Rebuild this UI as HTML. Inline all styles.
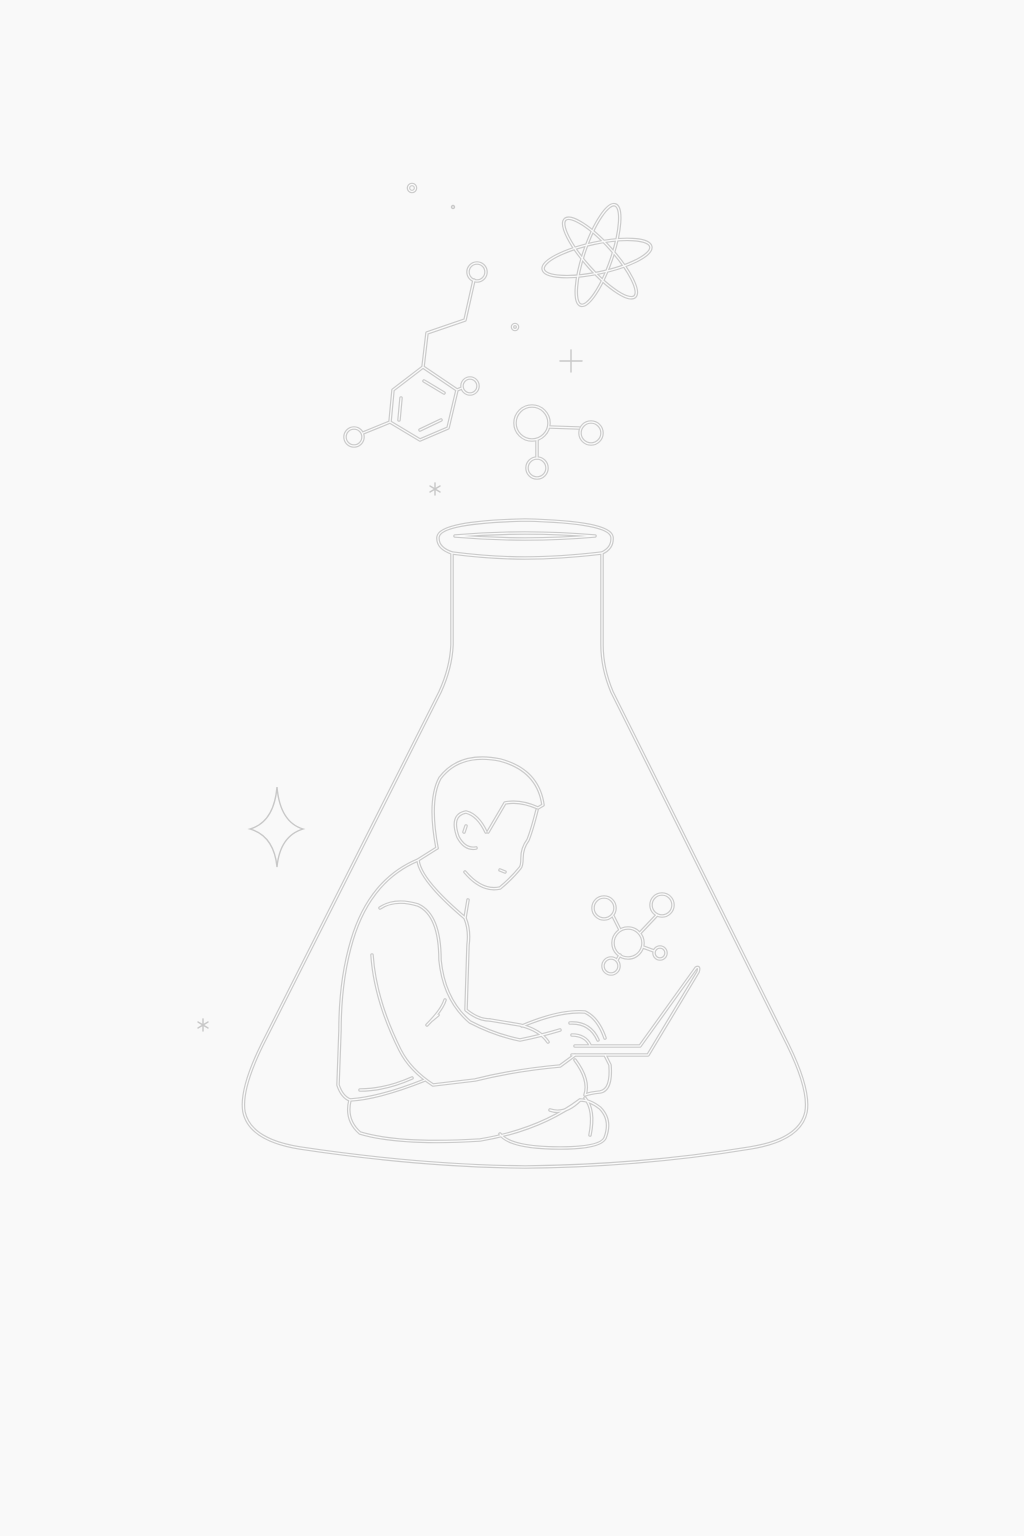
<!DOCTYPE html>
<html><head><meta charset="utf-8"><style>
html,body{margin:0;padding:0;background:#f9f9f9;}
svg{display:block}
</style></head><body>
<svg width="1024" height="1536" viewBox="0 0 1024 1536" xmlns="http://www.w3.org/2000/svg">
<rect width="1024" height="1536" fill="#f9f9f9"/>
<defs>
<g id="art" fill="none" stroke-linecap="round" stroke-linejoin="round">
<!-- flask -->
<path d="M452,553 L452,645 Q451,668 440,692 L262,1045 Q240,1090 244,1112 Q250,1140 300,1148 Q420,1166 525,1167 Q640,1166 750,1148 Q800,1140 806,1112 Q810,1090 788,1045 L612,692 Q602,668 602,645 L602,553"/>
<path d="M452,553 Q437,548 438,537 Q440,522 525,520 Q610,522 612,537 Q613,548 602,553 Q560,558 525,558 Q490,558 452,553Z"/>
<path d="M455,536 Q525,530 595,536 Q525,542 455,536Z"/>
<!-- molecule left -->
<path d="M423,367 L457,390 L448,428 L420,440 L390,422 L393,390 Z"/>
<path d="M424,381 L444,393 M401,398 L399,420 M420,430 L441,420"/>
<path d="M423,367 L427,333 L465,320 L474,280"/>
<circle cx="477" cy="272" r="9"/>
<path d="M457,390 L462,388"/><circle cx="470" cy="386" r="8"/>
<path d="M390,422 L363,433"/><circle cx="354" cy="437" r="9"/>
<!-- small molecule -->
<circle cx="532" cy="423" r="17"/>
<path d="M549,427 L579,428"/><circle cx="591" cy="433" r="11"/>
<path d="M537,440 L537,458"/><circle cx="537" cy="468" r="10"/>
<!-- atom -->
<ellipse cx="597" cy="258" rx="55" ry="15" transform="rotate(-12 597 258)"/>
<ellipse cx="598" cy="255" rx="53" ry="14" transform="rotate(-71 598 255)"/>
<ellipse cx="600" cy="258" rx="52" ry="14" transform="rotate(48 600 258)"/>
<!-- dots -->
<circle cx="412" cy="188" r="3.5"/>
<circle cx="515" cy="327" r="2.5"/>
<!-- flask molecule -->
<circle cx="628" cy="943" r="15"/>
<circle cx="604" cy="908" r="11"/><path d="M613,916 L620,930"/>
<circle cx="662" cy="905" r="11"/><path d="M657,915 L640,933"/>
<circle cx="611" cy="966" r="8"/><path d="M617,960 L620,955"/>
<circle cx="660" cy="953" r="6"/><path d="M643,947 L654,951"/>
<!-- laptop -->
<path d="M575,1046 L640,1046 L696,968 Q700,966 698,972 L648,1055 L572,1055"/>
<!-- man head -->
<path d="M437,848 Q428,800 440,778 Q460,752 500,760 Q538,770 543,805 L538,808 Q520,800 505,803 L488,832"/>
<path d="M537,810 Q532,830 528,840 Q522,848 522,858 Q522,866 520,868 Q512,878 500,888 Q482,892 465,872"/>
<path d="M486,832 Q478,815 466,812 Q450,815 458,837 Q465,850 476,848"/>
<path d="M464,832 L466,826"/>
<path d="M500,870 L505,872"/>
<!-- collar & body -->
<path d="M437,848 L418,860 Q420,880 465,918 L468,900"/>
<path d="M465,918 Q470,930 468,945 L466,1010 Q478,1020 490,1020"/>
<path d="M418,860 Q370,880 352,940 Q340,980 340,1030 L338,1085 Q342,1097 350,1100"/>
<path d="M380,908 Q395,898 418,905 Q440,915 440,960 Q444,1000 470,1022 Q495,1035 520,1040 Q540,1036 560,1030"/>
<path d="M372,955 Q375,1000 400,1050 Q410,1070 433,1085 L475,1080 Q515,1070 560,1066 L575,1055"/>
<path d="M490,1020 L520,1025 Q540,1030 548,1042"/>
<path d="M522,1026 Q560,1010 585,1012 Q598,1018 605,1038"/>
<path d="M570,1023 Q590,1022 598,1040 M572,1035 Q585,1035 590,1045"/>
<path d="M360,1090 Q385,1090 412,1078 M350,1100 Q380,1098 425,1080"/>
<path d="M427,1025 Q442,1010 445,1000 M432,1020 L438,1015"/>
<path d="M575,1060 Q590,1080 585,1095 Q590,1093 600,1092 Q612,1090 610,1065 L605,1055"/>
<path d="M350,1100 Q345,1120 360,1133 Q400,1145 480,1140 Q540,1130 580,1100"/>
<path d="M500,1134 Q510,1148 560,1148 Q600,1148 605,1138 Q612,1120 600,1108 Q590,1100 580,1100 Q565,1115 550,1110"/>
<path d="M585,1098 Q595,1110 590,1135"/>
</g>
</defs>
<use href="#art" stroke="#cbcbcb" stroke-width="3.6"/>
<use href="#art" stroke="#fbfbfb" stroke-width="1.2"/>
<g fill="none" stroke="#c8c8c8" stroke-width="1.4" stroke-linecap="round">
<path d="M277,787 Q280,822 303,829 Q280,836 277,867 Q274,836 250,829 Q274,822 277,787Z"/>
<path d="M571,350 L571,372 M560,361 L582,361"/>
<path d="M435,483 L435,495 M430,486 L440,492 M430,492 L440,486"/>
<path d="M203,1019 L203,1031 M198,1022 L208,1028 M198,1028 L208,1022"/>
<circle cx="453" cy="207" r="1.5"/>
</g>
</svg>
</body></html>
